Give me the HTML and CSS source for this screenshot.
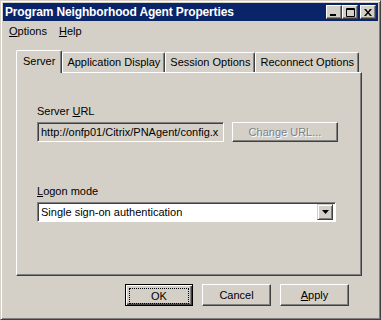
FILE: index.html
```html
<!DOCTYPE html>
<html lang="en">

<head>
    <meta charset="UTF-8">
    <title>Program Neighborhood Agent Properties</title>
    <link rel="stylesheet" href="styles.css">
</head>

<body>
    <div class="window">
        <div class="titlebar">
            <span class="title">Program Neighborhood Agent Properties</span>
            <div class="caption-btns">
                <span class="cbtn">
                    <svg width="8" height="7" viewBox="0 0 8 7"><rect x="0" y="5" width="6" height="2" fill="#000"/></svg>
                </span>
                <span class="cbtn">
                    <svg width="9" height="9" viewBox="0 0 9 9"><path d="M0.5 0.5h8v8h-8z M0.5 1.5h8" fill="none" stroke="#000"/></svg>
                </span>
                <span class="cbtn close">
                    <svg width="8" height="7" viewBox="0 0 8 7"><path d="M0 0h2l2 2.5 2-2.5h2l-3 3.5 3 3.5h-2l-2-2.5-2 2.5h-2l3-3.5z" fill="#000"/></svg>
                </span>
            </div>
        </div>

        <div class="menubar">
            <span class="menu"><u>O</u>ptions</span>
            <span class="menu"><u>H</u>elp</span>
        </div>

        <div class="tabs">
            <div class="tab active">Server</div>
            <div class="tab">Application Display</div>
            <div class="tab">Session Options</div>
            <div class="tab">Reconnect Options</div>
        </div>

        <div class="panel">
            <label class="label">Server <u>U</u>RL</label>
            <div class="row">
                <div class="textbox">http://onfp01/Citrix/PNAgent/config.x</div>
                <button class="btn disabled">Chan<u>g</u>e URL...</button>
            </div>

            <label class="label logon"><u>L</u>ogon mode</label>
            <div class="combo">
                <span class="combo-text">Single sign-on authentication</span>
                <span class="combo-arrow">
                    <svg width="7" height="4" viewBox="0 0 7 4"><path d="M0 0h7l-3.5 4z" fill="#000"/></svg>
                </span>
            </div>
        </div>

        <div class="actions">
            <button class="btn default"><span class="focus">OK</span></button>
            <button class="btn">Cancel</button>
            <button class="btn"><u>A</u>pply</button>
        </div>
    </div>
</body>

</html>
```

FILE: styles.css
```css
body {
    margin: 0;
    font-family: "Liberation Sans", Arial, sans-serif;
    font-size: 11px;
    color: #000;
    background: #d4d0c8;
}

.window {
    box-sizing: border-box;
    width: 381px;
    height: 320px;
    padding: 2px;
    background: #d4d0c8;
    border: 1px solid;
    border-color: #d4d0c8 #404040 #404040 #d4d0c8;
    box-shadow: inset 1px 1px #fff, inset -1px -1px #808080;
    display: flex;
    flex-direction: column;
}

.titlebar {
    height: 18px;
    background: #0a246a;
    color: #fff;
    display: flex;
    align-items: center;
    justify-content: space-between;
    padding: 0 2px 0 2px;
}

.title {
    font-weight: bold;
    font-size: 12px;
    letter-spacing: -0.15px;
}

.caption-btns {
    display: flex;
}

.cbtn {
    box-sizing: border-box;
    width: 16px;
    height: 14px;
    background: #d4d0c8;
    border: 1px solid;
    border-color: #fff #404040 #404040 #fff;
    box-shadow: inset -1px -1px #808080;
    display: flex;
    align-items: center;
    justify-content: center;
}

.cbtn.close {
    margin-left: 2px;
}

.menubar {
    height: 20px;
    display: flex;
    align-items: center;
    padding-left: 2px;
}

.menu {
    padding: 0 6px 0 4px;
    margin-right: 2px;
}

.tabs {
    display: flex;
    align-items: flex-end;
    margin: 9px 0 0 13px;
    height: 22px;
    position: relative;
    z-index: 1;
}

.tab {
    box-sizing: border-box;
    height: 20px;
    padding: 3px 4px 0 4px;
    border: 1px solid #fff;
    border-bottom: none;
    border-right-color: #404040;
    box-shadow: inset -1px 0 #808080;
    border-radius: 2px 2px 0 0;
    background: #d4d0c8;
    white-space: nowrap;
}

.tab.active {
    height: 23px;
    padding: 4px 6px 0 6px;
    margin-bottom: -1px;
}

.panel {
    box-sizing: border-box;
    margin: 0 16px 0 13px;
    height: 204px;
    padding: 32px 20px 0 20px;
    border: 1px solid;
    border-color: #fff #404040 #404040 #fff;
    box-shadow: inset -1px -1px #808080;
    display: flex;
    flex-direction: column;
}

.label {
    display: block;
    margin-bottom: 5px;
}

.label.logon {
    margin-top: 43px;
}

.row {
    display: flex;
    gap: 8px;
}

.textbox {
    box-sizing: border-box;
    width: 187px;
    height: 20px;
    padding: 3px 3px 0 3px;
    border: 1px solid;
    border-color: #808080 #fff #fff #808080;
    box-shadow: inset 1px 1px #404040, inset -1px -1px #d4d0c8;
    overflow: hidden;
    white-space: nowrap;
}

.btn {
    box-sizing: border-box;
    font: inherit;
    color: #000;
    background: #d4d0c8;
    border: 1px solid;
    border-color: #fff #404040 #404040 #fff;
    box-shadow: inset -1px -1px #808080;
    padding: 0;
    height: 22px;
    width: 69px;
}

.btn.disabled {
    width: 106px;
    height: 20px;
    color: #808080;
    text-shadow: 1px 1px #fff;
}

.combo {
    box-sizing: border-box;
    width: 299px;
    height: 20px;
    display: flex;
    align-items: center;
    justify-content: space-between;
    background: #fff;
    border: 1px solid;
    border-color: #808080 #fff #fff #808080;
    box-shadow: inset 1px 1px #404040;
    padding: 2px 2px 2px 3px;
}

.combo-arrow {
    box-sizing: border-box;
    width: 16px;
    height: 16px;
    background: #d4d0c8;
    border: 1px solid;
    border-color: #d4d0c8 #404040 #404040 #d4d0c8;
    box-shadow: inset 1px 1px #fff, inset -1px -1px #808080;
    display: flex;
    align-items: center;
    justify-content: center;
}

.actions {
    display: flex;
    justify-content: flex-end;
    gap: 9px;
    margin: 8px 29px 0 0;
}

.btn.default {
    width: 68px;
    border: 1px solid #000;
    box-shadow: inset 1px 1px #fff, inset -1px -1px #404040, inset -2px -2px #808080;
}

.focus {
    display: flex;
    align-items: center;
    justify-content: center;
    margin: 3px;
    height: 14px;
    border: 1px dotted #000;
}
```
